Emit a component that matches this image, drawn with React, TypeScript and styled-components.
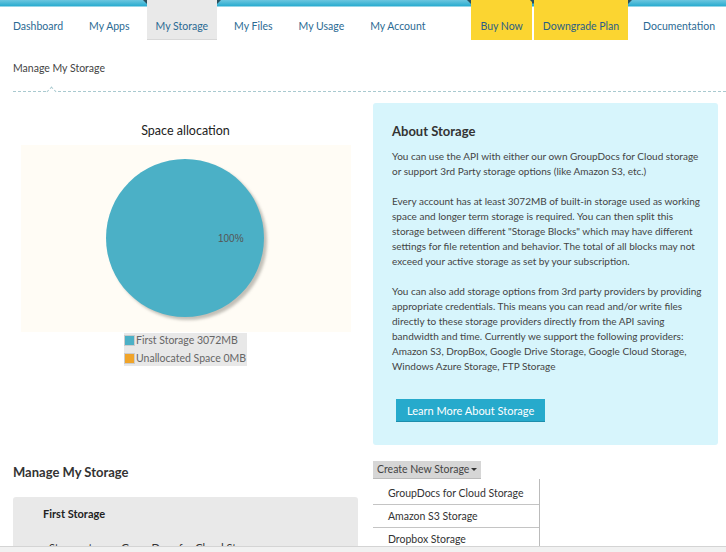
import React from "react";
import styled, { createGlobalStyle, css } from "styled-components";

const Global = createGlobalStyle`
  html, body { margin: 0; padding: 0; background: #fff; }
  body { font-family: Lato, "Open Sans", sans-serif; color: #333; overflow: hidden; }
  * { box-sizing: border-box; }
`;

const Page = styled.div`
  width: 726px;
  height: 552px;
  overflow: hidden;
  position: relative;
`;

const Nav = styled.nav`
  display: flex;
  align-items: stretch;
  height: 40px;
  gap: 8px;
  padding-left: 4px;
  background: linear-gradient(to bottom, #6cc6df 0, #2aacd0 6px, #ffffff 7px);
`;

const cornerMarks = css`
  &::before,
  &::after {
    content: "";
    position: absolute;
    top: 0;
    width: 0;
    height: 0;
    border-top: 4px solid #2b4f5c;
  }
  &::before {
    left: -4px;
    border-left: 4px solid transparent;
  }
  &::after {
    right: -4px;
    border-right: 4px solid transparent;
  }
`;

const NavItem = styled.a<{ $active?: boolean; $promo?: boolean; $ml?: number }>`
  position: relative;
  display: flex;
  align-items: center;
  padding: 12px 9px 0;
  font-size: 10.5px;
  color: ${(p) => (p.$promo ? "#2b5f86" : "#2b6a93")};
  text-decoration: none;
  white-space: nowrap;
  margin-left: ${(p) => p.$ml ?? 0}px;
  background: ${(p) => (p.$active ? "#e9e9e9" : p.$promo ? "#fbd531" : "transparent")};
  border-bottom: ${(p) => (p.$active ? "1px solid #d8d8d8" : "none")};
  ${(p) => (p.$active || p.$promo ? cornerMarks : "")}
`;

const Breadcrumb = styled.div`
  margin: 0 0 0 13px;
  padding: 21px 0 16px;
  line-height: 14px;
  font-size: 10.5px;
  color: #444;
  border-bottom: 1px dashed #a9c9cf;
  position: relative;
  &::after {
    content: "";
    position: absolute;
    left: 35px;
    bottom: -4px;
    width: 6px;
    height: 6px;
    background: #fff;
    border-left: 1px dashed #a9c9cf;
    border-top: 1px dashed #a9c9cf;
    transform: rotate(45deg);
  }
`;

const Columns = styled.div`
  display: grid;
  grid-template-columns: 345px 345px;
  column-gap: 15px;
  padding: 0 8px 0 13px;
`;

const LeftTop = styled.div`
  display: flex;
  flex-direction: column;
  align-items: center;
  padding-top: 31px;
`;

const ChartTitle = styled.div`
  font-size: 12.5px;
  line-height: 16px;
  color: #222;
  margin-bottom: 6px;
`;

const ChartArea = styled.div`
  width: 330px;
  height: 187px;
  background: #fffcf5;
  display: flex;
  align-items: center;
  justify-content: center;
`;

const Legend = styled.div`
  margin-top: 1px;
  background: #e8e8e8;
  padding: 0 1px 1px 0;
  display: flex;
  flex-direction: column;
  gap: 4px;
`;

const LegendRow = styled.div`
  display: flex;
  align-items: center;
  font-size: 10.5px;
  color: #666;
  height: 14px;
`;

const Swatch = styled.span<{ $c: string }>`
  width: 11px;
  height: 11px;
  background: ${(p) => p.$c};
  border: 1px solid #ccc;
  margin-right: 1px;
`;

const InfoPanel = styled.div`
  margin-top: 11px;
  background: #d7f5fc;
  border-radius: 3px;
  padding: 20px 15px 22px 19px;
  height: 342px;
`;

const InfoTitle = styled.h3`
  margin: 0 0 10px;
  font-size: 13px;
  line-height: 16px;
  font-weight: 700;
  color: #333;
`;

const InfoText = styled.p`
  margin: 0 0 15px;
  font-size: 10px;
  line-height: 15px;
  color: #444;
`;

const PrimaryButton = styled.button`
  margin-top: 10px;
  margin-left: 4px;
  background: #26aacc;
  color: #fff;
  border: none;
  border-bottom: 1px solid #1e8eac;
  font-family: inherit;
  font-size: 11px;
  padding: 0 11px;
  height: 23px;
`;

const SectionTitle = styled.h2`
  margin: 19px 0 0;
  font-size: 13px;
  line-height: 16px;
  font-weight: 700;
  color: #333;
`;

const StorageCard = styled.div`
  margin-top: 17px;
  background: #e9e9e9;
  border-radius: 3px;
  padding: 10px 30px;
  height: 80px;
`;

const CardTitle = styled.div`
  font-size: 11px;
  line-height: 14px;
  font-weight: 700;
  color: #222;
`;

const CardLine = styled.div`
  margin-top: 20px;
  padding-left: 6px;
  font-size: 11px;
  color: #333;
`;

const DropWrap = styled.div`
  padding-top: 12px;
`;

const DropButton = styled.button`
  background: #d6d6d6;
  border: none;
  border-bottom: 1px solid #bbb;
  font-family: inherit;
  font-size: 10.5px;
  color: #444;
  padding: 0 4px;
  height: 18px;
  display: inline-flex;
  align-items: center;
  gap: 2px;
`;

const Caret = styled.span`
  width: 0;
  height: 0;
  border-left: 3px solid transparent;
  border-right: 3px solid transparent;
  border-top: 3px solid #333;
`;

const Menu = styled.ul`
  list-style: none;
  margin: 0;
  padding: 0;
  width: 167px;
  border-right: 1px solid #bbb;
`;

const MenuItem = styled.li`
  font-size: 10.5px;
  color: #333;
  padding: 0 15px;
  height: 23px;
  white-space: nowrap;
  display: flex;
  align-items: center;
  border-bottom: 1px solid #c4c4c4;
  &:first-child { height: 26px; padding-top: 3px; }
`;

const Footer = styled.div`
  position: absolute;
  left: 0;
  right: 0;
  bottom: 0;
  height: 6px;
  background: #f1f1f1;
  border-top: 1px solid #d4d4d4;
`;

function Pie() {
  return (
    <svg width="180" height="180" viewBox="0 0 180 180">
      <defs>
        <filter id="sh" x="-20%" y="-20%" width="140%" height="140%">
          <feGaussianBlur stdDeviation="1.5" />
        </filter>
      </defs>
      <circle cx="92" cy="92" r="79" fill="#b3b0a8" opacity="0.8" filter="url(#sh)" />
      <circle cx="89" cy="89" r="79" fill="#4bb0c6" />
      <text x="122" y="93" fontSize="10" fill="#555" fontFamily="'Liberation Sans', Arial, sans-serif">
        100%
      </text>
    </svg>
  );
}

export default function App() {
  return (
    <Page>
      <Global />
      <Nav>
        <NavItem>Dashboard</NavItem>
        <NavItem>My Apps</NavItem>
        <NavItem $active>My Storage</NavItem>
        <NavItem>My Files</NavItem>
        <NavItem>My Usage</NavItem>
        <NavItem>My Account</NavItem>
        <NavItem $promo $ml={29}>Buy Now</NavItem>
        <NavItem $promo $ml={-6}>Downgrade Plan</NavItem>
        <NavItem $ml={-2}>Documentation</NavItem>
      </Nav>
      <Breadcrumb>Manage My Storage</Breadcrumb>
      <Columns>
        <LeftTop>
          <ChartTitle>Space allocation</ChartTitle>
          <ChartArea>
            <Pie />
          </ChartArea>
          <Legend>
            <LegendRow>
              <Swatch $c="#4bb0c6" />
              First Storage 3072MB
            </LegendRow>
            <LegendRow>
              <Swatch $c="#f0a429" />
              Unallocated Space 0MB
            </LegendRow>
          </Legend>
        </LeftTop>
        <InfoPanel>
          <InfoTitle>About Storage</InfoTitle>
          <InfoText>
            You can use the API with either our own GroupDocs for Cloud storage or support 3rd Party storage
            options (like Amazon S3, etc.)
          </InfoText>
          <InfoText>
            Every account has at least 3072MB of built-in storage used as working space and longer term storage
            is required. You can then split this storage between different "Storage Blocks" which may have
            different settings for file retention and behavior. The total of all blocks may not exceed your
            active storage as set by your subscription.
          </InfoText>
          <InfoText>
            You can also add storage options from 3rd party providers by providing appropriate credentials.
            This means you can read and/or write files directly to these storage providers directly from the
            API saving bandwidth and time. Currently we support the following providers: Amazon S3, DropBox,
            Google Drive Storage, Google Cloud Storage, Windows Azure Storage, FTP Storage
          </InfoText>
          <PrimaryButton>Learn More About Storage</PrimaryButton>
        </InfoPanel>
        <div>
          <SectionTitle>Manage My Storage</SectionTitle>
          <StorageCard>
            <CardTitle>First Storage</CardTitle>
            <CardLine>Storage type:&nbsp;&nbsp; GroupDocs for Cloud Storage</CardLine>
          </StorageCard>
        </div>
        <DropWrap>
          <DropButton>
            Create New Storage
            <Caret />
          </DropButton>
          <Menu>
            <MenuItem>GroupDocs for Cloud Storage</MenuItem>
            <MenuItem>Amazon S3 Storage</MenuItem>
            <MenuItem>Dropbox Storage</MenuItem>
          </Menu>
        </DropWrap>
      </Columns>
      <Footer />
    </Page>
  );
}
